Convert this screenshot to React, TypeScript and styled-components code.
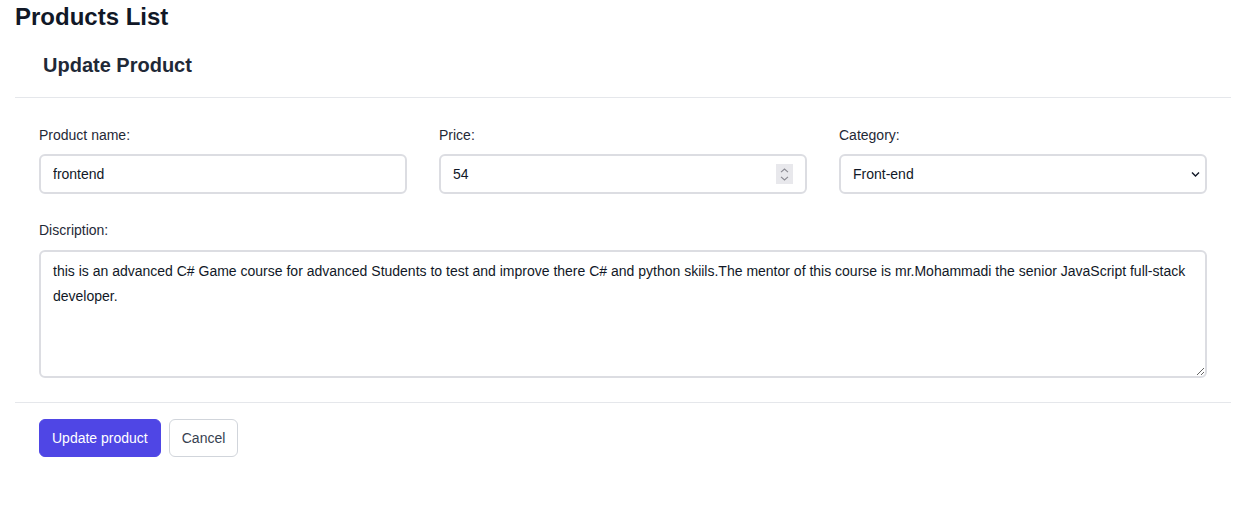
import React from "react";
import styled, { createGlobalStyle } from "styled-components";

const Global = createGlobalStyle`
  html, body { margin: 0; padding: 0; background: #ffffff; }
  body { font-family: "Liberation Sans", Arial, sans-serif; color: #111827; }
  * { box-sizing: border-box; }
`;

const Page = styled.div`
  padding: 3px 8px 0 15px;
`;

const Title = styled.h1`
  margin: 0;
  font-size: 24px;
  font-weight: 700;
  line-height: 27px;
  color: #111827;
`;

const CardHeader = styled.div`
  padding: 24px 28px 20px;
  border-bottom: 1px solid #e5e7eb;
`;

const CardTitle = styled.h2`
  margin: 0;
  font-size: 20px;
  font-weight: 700;
  line-height: 23px;
  color: #1f2937;
`;

const CardBody = styled.div`
  padding: 29px 24px 24px;
  display: flex;
  flex-direction: column;
  gap: 28px;
  border-bottom: 1px solid #e5e7eb;
`;

const Row = styled.div`
  display: grid;
  grid-template-columns: repeat(3, 1fr);
  gap: 32px;
`;

const Field = styled.div<{ $gap?: number }>`
  display: flex;
  flex-direction: column;
  gap: ${(p) => p.$gap ?? 11}px;
`;

const Label = styled.label`
  font-size: 14px;
  line-height: 16px;
  color: #1f2937;
`;

const controlBase = `
  width: 100%;
  height: 40px;
  border: 2px solid #dcdde2;
  border-radius: 6px;
  padding: 0 12px;
  font-family: "Liberation Sans", Arial, sans-serif;
  font-size: 14px;
  color: #111827;
  background: #ffffff;
  outline: none;
`;

const ControlWrap = styled.div`
  position: relative;
`;

const Input = styled.input`
  ${controlBase}
  -moz-appearance: textfield;
  &::-webkit-inner-spin-button,
  &::-webkit-outer-spin-button {
    -webkit-appearance: none;
    margin: 0;
  }
`;

const Spinner = styled.div`
  position: absolute;
  right: 14px;
  top: 10px;
  width: 17px;
  height: 20px;
  background: #e8e8ec;
  display: flex;
  flex-direction: column;
  align-items: center;
  justify-content: center;
  gap: 3px;
  pointer-events: none;
`;

const Select = styled.select`
  ${controlBase}
  appearance: none;
  -webkit-appearance: none;
`;

const Chevron = styled.svg`
  position: absolute;
  right: 7px;
  top: 17px;
  width: 9px;
  height: 7px;
  pointer-events: none;
`;

const TextArea = styled.textarea`
  ${controlBase}
  height: 128px;
  padding: 7px 12px 5px;
  line-height: 25px;
  resize: vertical;
`;

const Footer = styled.div`
  padding: 16px 24px;
  display: flex;
  gap: 8px;
`;

const Button = styled.button<{ $primary?: boolean }>`
  height: 38px;
  padding: 0 12px;
  border-radius: 6px;
  font-family: "Liberation Sans", Arial, sans-serif;
  font-size: 14px;
  cursor: pointer;
  border: 1px solid ${(p) => (p.$primary ? "#4f46e5" : "#d1d5db")};
  background: ${(p) => (p.$primary ? "#4f46e5" : "#ffffff")};
  color: ${(p) => (p.$primary ? "#ffffff" : "#374151")};
`;

const description =
  "this is an advanced C# Game course for advanced Students to test and improve there C# and python skiils.The mentor of this course is mr.Mohammadi the senior JavaScript full-stack developer.";

export default function App() {
  return (
    <>
      <Global />
      <Page>
        <Title>Products List</Title>
        <CardHeader>
          <CardTitle>Update Product</CardTitle>
        </CardHeader>
        <CardBody>
          <Row>
            <Field>
              <Label>Product name:</Label>
              <Input type="text" defaultValue="frontend" />
            </Field>
            <Field>
              <Label>Price:</Label>
              <ControlWrap>
                <Input type="number" defaultValue={54} />
                <Spinner>
                  <svg width="9" height="5" viewBox="0 0 9 5">
                    <path d="M1 4.2 L4.5 1 L8 4.2" fill="none" stroke="#8a8a92" strokeWidth="1.1" />
                  </svg>
                  <svg width="9" height="5" viewBox="0 0 9 5">
                    <path d="M1 0.8 L4.5 4 L8 0.8" fill="none" stroke="#8a8a92" strokeWidth="1.1" />
                  </svg>
                </Spinner>
              </ControlWrap>
            </Field>
            <Field>
              <Label>Category:</Label>
              <ControlWrap>
                <Select defaultValue="front">
                  <option value="front">Front-end</option>
                  <option value="back">Back-end</option>
                </Select>
                <Chevron viewBox="0 0 9 7">
                  <path d="M1 1.5 L4.5 5 L8 1.5" fill="none" stroke="#111827" strokeWidth="1.4" />
                </Chevron>
              </ControlWrap>
            </Field>
          </Row>
          <Field $gap={12}>
            <Label>Discription:</Label>
            <TextArea defaultValue={description} />
          </Field>
        </CardBody>
        <Footer>
          <Button $primary>Update product</Button>
          <Button>Cancel</Button>
        </Footer>
      </Page>
    </>
  );
}
